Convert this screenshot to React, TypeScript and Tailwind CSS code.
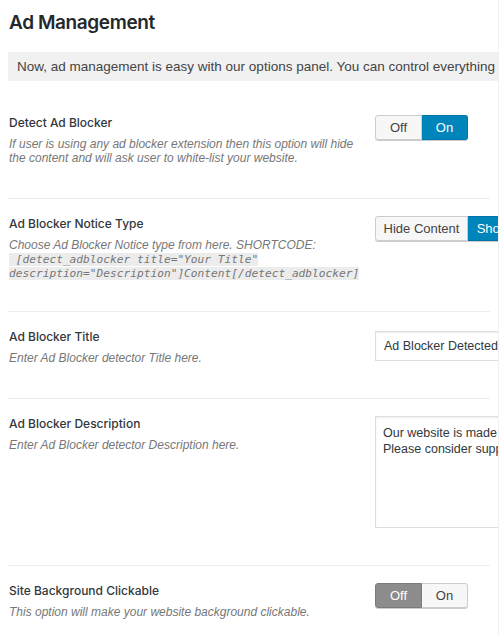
import React from "react";

const font = { fontFamily: '"Liberation Sans", Arial, sans-serif' };
const mono = { fontFamily: '"DejaVu Sans Mono", "Liberation Mono", monospace' };
const heading = { fontFamily: 'Inter, "Liberation Sans", sans-serif' };

function Toggle({
  left,
  right,
  active,
  lw,
  rw,
}: {
  left: string;
  right: string;
  active: "left" | "right";
  lw: string;
  rw: string;
}) {
  const on = "bg-[#0085ba] text-white border-[#0073aa]";
  const onGray = "bg-[#8c8c8c] text-white border-[#7a7a7a]";
  const off = "bg-[#f7f7f7] text-[#444] border-[#cccccc]";
  return (
    <div className="flex h-[25px] w-max rounded-[3px] text-[13px] shadow-[0_1px_0_#cccccc]">
      <div
        className={`${lw} flex items-center justify-center rounded-l-[3px] border ${
          active === "left" ? onGray : off
        }`}
      >
        {left}
      </div>
      <div
        className={`${rw} flex items-center justify-center rounded-r-[3px] border border-l-0 ${
          active === "right" ? on : off
        }`}
      >
        {right}
      </div>
    </div>
  );
}

function Row({
  title,
  children,
  control,
  pb,
  first,
}: {
  title: string;
  children: React.ReactNode;
  control: React.ReactNode;
  pb: string;
  first?: boolean;
}) {
  return (
    <div className={`mx-[8px] flex pt-[16px] ${pb} ${first ? "" : "border-t border-[#ededed]"}`}>
      <div className="w-[367px] shrink-0 pl-[1px]">
        <div className="text-[12px] font-medium leading-[18px] text-[#32373c]" style={heading}>
          {title}
        </div>
        <div className="mt-[5px] max-w-[352px] text-[12px] italic leading-[14px] text-[#777]">
          {children}
        </div>
      </div>
      <div className="mt-[1px] min-w-0 flex-1">{control}</div>
    </div>
  );
}

export default function App() {
  return (
    <div className="h-[635px] w-[500px] overflow-hidden bg-white" style={font}>
      <div className="h-full w-[499px] overflow-hidden border-r border-[#f0f0f0]">
        <h1
          className="pl-[9px] pt-[10px] text-[19px] font-semibold leading-[26px] tracking-[-0.4px] text-[#23282d]"
          style={heading}
        >
          Ad Management
        </h1>
        <div className="ml-[8px] mt-[16px] h-[29px] whitespace-nowrap bg-[#f1f1f1] pl-[9px] text-[13.5px] leading-[29px] text-[#444]">
          Now, ad management is easy with our options panel. You can control everything
        </div>

        <div className="mt-[17px]">
          <Row
            first
            title="Detect Ad Blocker"
            pb="pb-[33px]"
            control={<Toggle left="Off" right="On" active="right" lw="w-[47px]" rw="w-[46px]" />}
          >
            If user is using any ad blocker extension then this option will hide the content and will
            ask user to white-list your website.
          </Row>

          <Row
            title="Ad Blocker Notice Type"
            pb="pb-[31px]"
            control={
              <div className="w-[260px]">
                <Toggle
                  left="Hide Content"
                  right="Show Content"
                  active="right"
                  lw="w-[93px]"
                  rw="w-[100px]"
                />
              </div>
            }
          >
            <div>Choose Ad Blocker Notice type from here. SHORTCODE:</div>
            <div className="h-[14px] leading-[14px]">
              <span className="whitespace-pre bg-[#ececec] text-[11.2px] leading-[14px]" style={mono}>
                {' [detect_adblocker title="Your Title"'}
              </span>
            </div>
            <div className="h-[14px] leading-[14px]">
              <span className="whitespace-pre bg-[#ececec] text-[11.2px] leading-[14px]" style={mono}>
                {'description="Description"]Content[/detect_adblocker]'}
              </span>
            </div>
          </Row>

          <Row
            title="Ad Blocker Title"
            pb="pb-[33px]"
            control={
              <div className="mt-[2px] flex h-[30px] w-[220px] items-center whitespace-nowrap border border-[#dddddd] pl-[8px] text-[12.5px] text-[#32373c] shadow-[inset_0_1px_2px_rgba(0,0,0,0.07)]">
                Ad Blocker Detected
              </div>
            }
          >
            Enter Ad Blocker detector Title here.
          </Row>

          <Row
            title="Ad Blocker Description"
            pb="pb-[37px]"
            control={
              <div className="h-[112px] w-[300px] whitespace-nowrap border border-[#dddddd] px-[7px] pt-[8px] text-[12.5px] leading-[16px] text-[#32373c] shadow-[inset_0_1px_2px_rgba(0,0,0,0.07)]">
                <div>Our website is made possible by displaying online advertisements to our visitors.</div>
                <div>Please consider supporting us by disabling your ad blocker.</div>
              </div>
            }
          >
            Enter Ad Blocker detector Description here.
          </Row>

          <Row
            title="Site Background Clickable"
            pb="pb-[20px]"
            control={<Toggle left="Off" right="On" active="left" lw="w-[47px]" rw="w-[46px]" />}
          >
            This option will make your website background clickable.
          </Row>
        </div>
      </div>
    </div>
  );
}
